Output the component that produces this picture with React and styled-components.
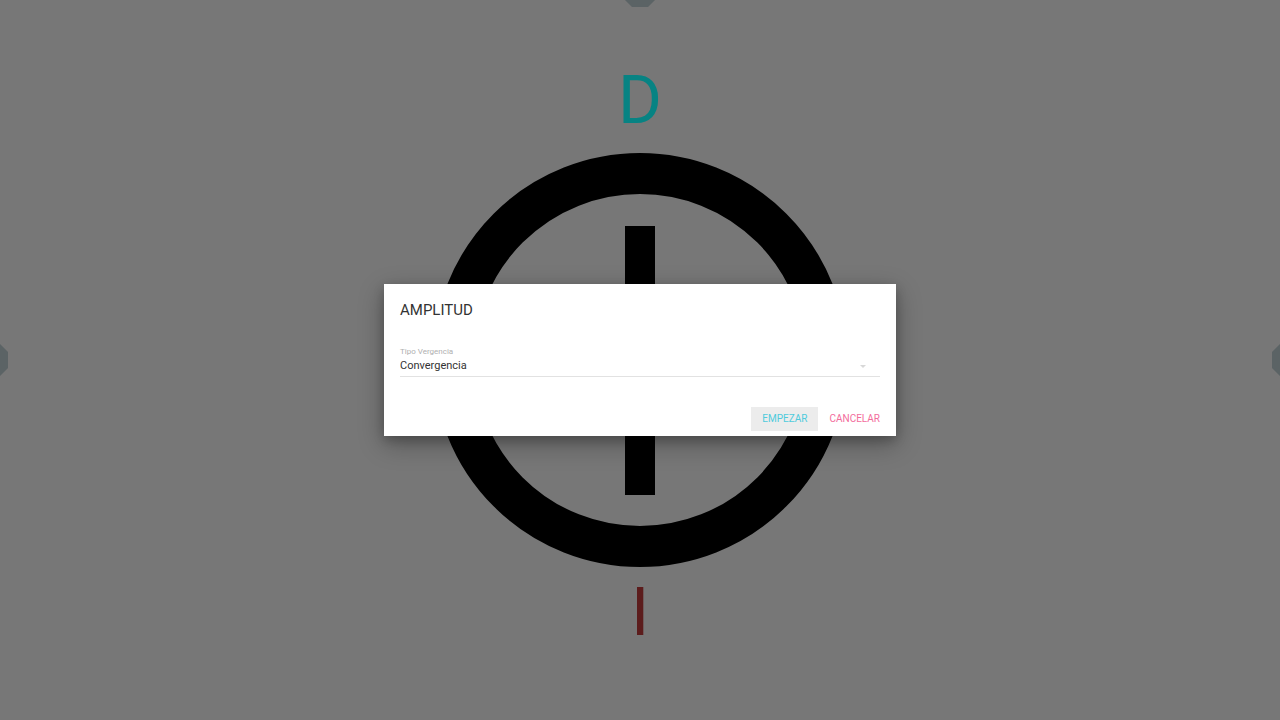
import styled, {createGlobalStyle} from 'styled-components'

const GlobalStyle = createGlobalStyle`
  html, body {
    margin: 0;
    padding: 0;
    height: 100%;
    background-color: #777777;
    font-family: Roboto, 'Liberation Sans', Arial, sans-serif;
    overflow: hidden;
  }
`

const Octagon = ({size = 40}) => (
  <svg width={size} height={size} viewBox="0 0 40 40">
    <polygon
      points="12,0 28,0 40,12 40,28 28,40 12,40 0,28 0,12"
      fill="#5b6365"
    />
  </svg>
)

const Target = () => (
  <svg width="414" height="414" viewBox="0 0 414 414">
    <circle cx="207" cy="207" r="186.5" fill="none" stroke="#000" strokeWidth="41" />
    <rect x="192" y="73" width="30" height="269" fill="#000" />
  </svg>
)

export default function App() {
  return (
    <Page>
      <GlobalStyle />
      <Scene>
        <Letter color="#078383">D</Letter>
        <TargetWrap>
          <Target />
        </TargetWrap>
        <Letter color="#5c1c1c">I</Letter>
      </Scene>

      <EdgeButton style={{left: 620, top: -33}}>
        <Octagon />
      </EdgeButton>
      <EdgeButton style={{left: -32, top: 340}}>
        <Octagon />
      </EdgeButton>
      <EdgeButton style={{left: 1272, top: 340}}>
        <Octagon />
      </EdgeButton>

      <Overlay>
        <Dialog>
          <Title>AMPLITUD</Title>
          <Field>
            <Label>Tipo Vergencia</Label>
            <SelectRow>
              <Value>Convergencia</Value>
              <Caret />
            </SelectRow>
          </Field>
          <Actions>
            <ActionButton color="#4fcbdc" bg="#ececec">Empezar</ActionButton>
            <ActionButton color="#f36c9c">Cancelar</ActionButton>
          </Actions>
        </Dialog>
      </Overlay>
    </Page>
  )
}

const Page = styled.div`
  position: relative;
  width: 1280px;
  height: 720px;
  overflow: hidden;
`
const Scene = styled.div`
  display: flex;
  flex-direction: column;
  align-items: center;
  padding-top: 62px;
`
const Letter = styled.div`
  color: ${props => props.color};
  font-size: 67px;
  line-height: 76px;
  height: 76px;
  font-family: Roboto, 'Liberation Sans', sans-serif;
`
const TargetWrap = styled.div`
  margin-top: 15px;
  margin-bottom: 7px;
  height: 414px;
`
const EdgeButton = styled.div`
  position: absolute;
  width: 40px;
  height: 40px;
`
const Overlay = styled.div`
  position: absolute;
  inset: 0;
  display: flex;
  align-items: center;
  justify-content: center;
`
const Dialog = styled.div`
  width: 512px;
  height: 152px;
  box-sizing: border-box;
  background-color: #fff;
  box-shadow: 0 8px 24px rgba(0, 0, 0, 0.3), 0 4px 10px rgba(0, 0, 0, 0.2);
  display: flex;
  flex-direction: column;
  padding: 16px 5px 5px 16px;
`
const Title = styled.div`
  font-size: 15px;
  line-height: 20px;
  color: #333;
`
const Field = styled.div`
  margin-top: 27px;
  margin-right: 11px;
  border-bottom: 1px solid #e2e2e2;
  padding-bottom: 3px;
`
const Label = styled.div`
  font-size: 8px;
  line-height: 10px;
  color: #b0b0b0;
`
const SelectRow = styled.div`
  display: flex;
  align-items: center;
  justify-content: space-between;
  margin-top: 2px;
`
const Value = styled.div`
  font-size: 11px;
  line-height: 14px;
  color: #333;
`
const Caret = styled.div`
  width: 0;
  height: 0;
  border-left: 3px solid transparent;
  border-right: 3px solid transparent;
  border-top: 3px solid #d8d8d8;
  margin-right: 14px;
`
const Actions = styled.div`
  margin-top: auto;
  display: flex;
  justify-content: flex-end;
`
const ActionButton = styled.div`
  height: 24px;
  line-height: 24px;
  padding: 0 11px;
  font-size: 10px;
  text-transform: uppercase;
  color: ${props => props.color};
  background-color: ${props => props.bg || 'transparent'};
`
